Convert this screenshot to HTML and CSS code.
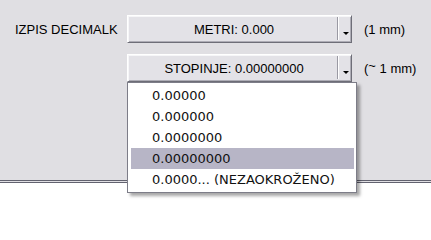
FILE: index.html
```html
<!DOCTYPE html>
<html lang="sl">
<head>
<meta charset="utf-8">
<title>Izpis decimalk</title>
<link rel="stylesheet" href="styles.css">
</head>
<body>
<div class="panel">
  <div class="grid">
    <div class="label">IZPIS DECIMALK</div>
    <div class="combo">
      <div class="combo-text">METRI: 0.000</div>
      <div class="combo-btn"><span class="arrow"></span></div>
    </div>
    <div class="unit">(1 mm)</div>

    <div class="label"></div>
    <div class="combo open">
      <div class="combo-text">STOPINJE: 0.00000000</div>
      <div class="combo-btn"><span class="arrow"></span></div>
      <ul class="list">
        <li class="item">0.00000</li>
        <li class="item">0.000000</li>
        <li class="item">0.0000000</li>
        <li class="item selected">0.00000000</li>
        <li class="item">0.0000... (NEZAOKROŽENO)</li>
      </ul>
    </div>
    <div class="unit">(<span class="tilde">~</span>&nbsp;1 mm)</div>
  </div>
</div>
<div class="footer"></div>
</body>
</html>
```
FILE: styles.css
```css
html, body {
  margin: 0;
  padding: 0;
  background: #ffffff;
}

body {
  font-family: "Liberation Sans", Arial, sans-serif;
  font-size: 13px;
  color: #000;
  min-height: 212px;
}

.panel {
  position: relative;
  z-index: 1;
  height: 180px;
  background: #e0dfe3;
  border-bottom: 3px double #62626f;
}

.footer {
  height: 29px;
  background: #ffffff;
}

.grid {
  display: grid;
  grid-template-columns: 112px 225px auto;
  grid-auto-rows: 28px;
  row-gap: 11px;
  padding: 15px 0 0 15px;
}

.label {
  display: flex;
  align-items: center;
}

.unit {
  display: flex;
  align-items: center;
  margin-left: 12px;
  white-space: nowrap;
}

.tilde {
  position: relative;
  top: -3px;
}

.combo {
  position: relative;
  display: flex;
  box-sizing: border-box;
  background: #e3e2e7;
  border: 1px solid;
  border-color: #ffffff #6e6e78 #6e6e78 #ffffff;
  box-shadow: inset 1px 1px 0 #f6f6f8, inset -1px -1px 0 #aeadb6;
}

.combo-text {
  flex: 1;
  display: flex;
  align-items: center;
  justify-content: center;
  padding-left: 3px;
  white-space: nowrap;
}

.combo-btn {
  width: 14px;
  margin: 1px 0 2px;
  border-left: 1px solid #9a99a3;
  box-shadow: inset 1px 0 0 #ffffff;
  display: flex;
  align-items: flex-end;
  justify-content: center;
  padding-bottom: 5px;
  box-sizing: border-box;
}

.arrow {
  width: 0;
  height: 0;
  border-left: 3px solid transparent;
  border-right: 3px solid transparent;
  border-top: 3px solid #000;
  margin-left: 2px;
}

.list {
  position: absolute;
  left: -1px;
  top: 27px;
  width: 230px;
  box-sizing: border-box;
  margin: 0;
  padding: 2px 2px 2px 3px;
  list-style: none;
  background: #ffffff;
  border: 1px solid #7d7d88;
  box-shadow: 3px 3px 3px rgba(0, 0, 0, 0.35);
  z-index: 5;
  font-family: "DejaVu Sans", Verdana, sans-serif;
  font-size: 13px;
}

.item {
  height: 21px;
  line-height: 21px;
  padding-left: 21px;
  white-space: nowrap;
  color: #111;
}

.item.selected {
  background: #b7b5c6;
}
```
